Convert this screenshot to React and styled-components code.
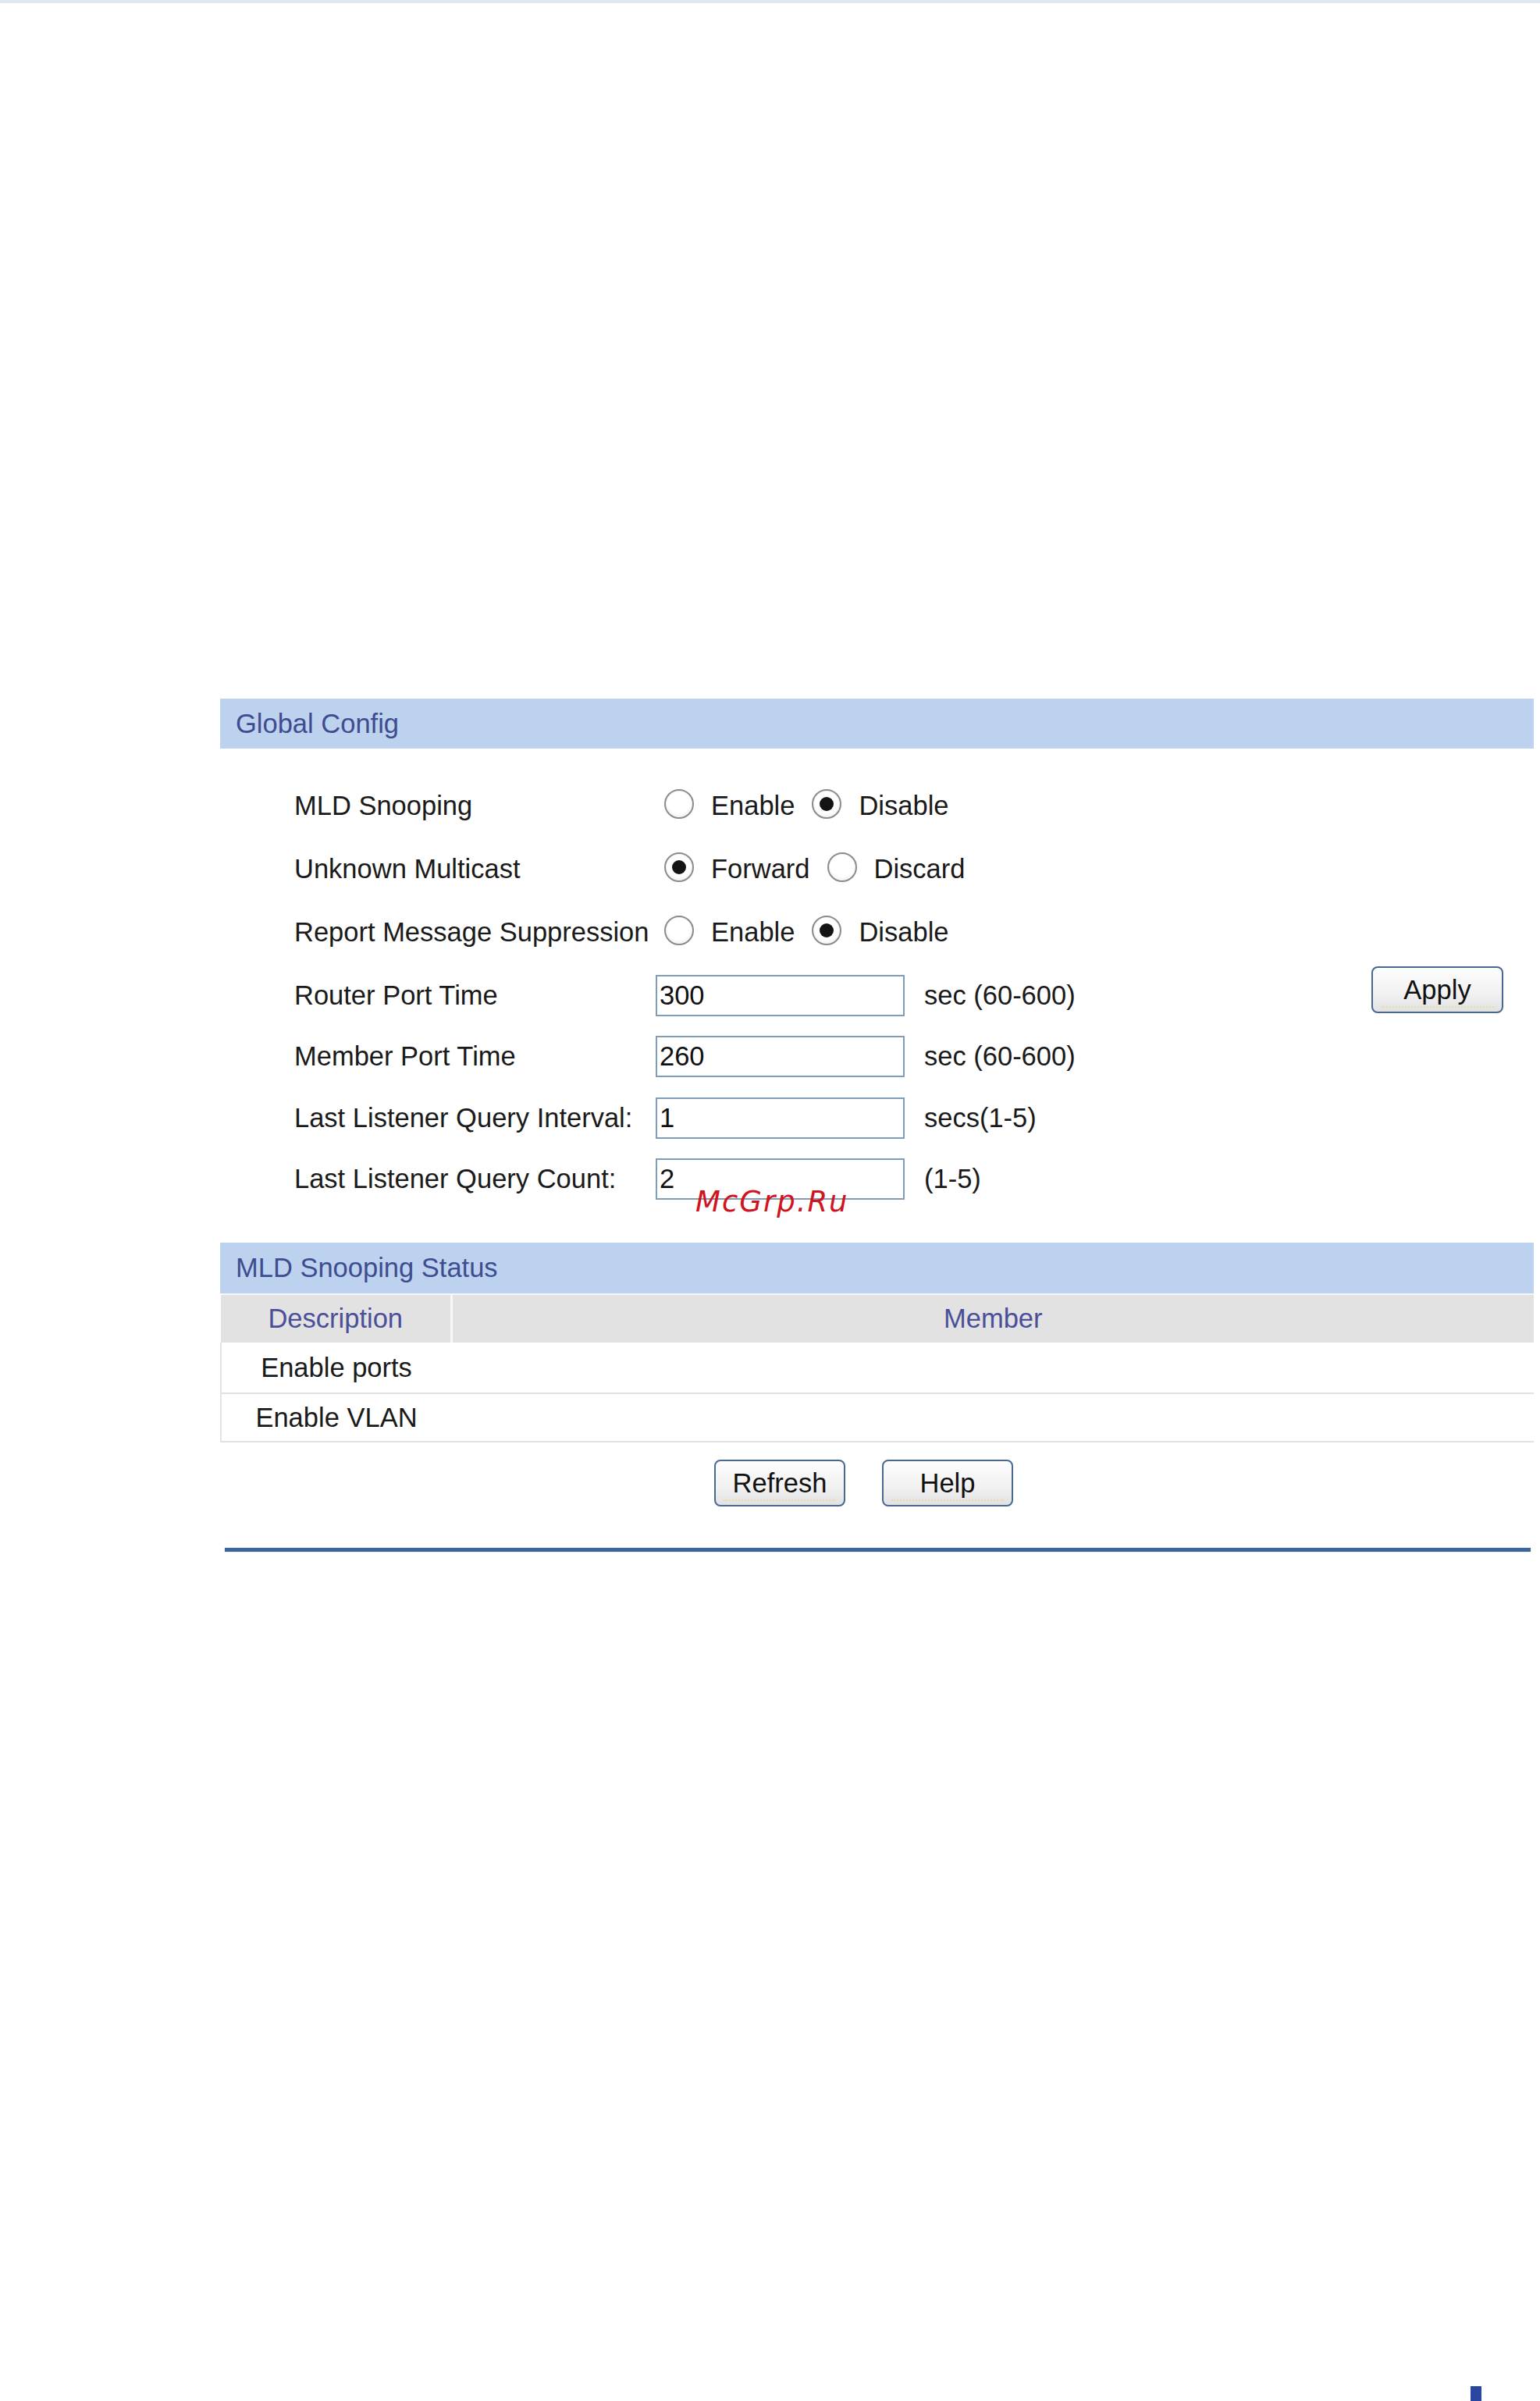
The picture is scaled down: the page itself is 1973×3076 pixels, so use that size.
import React from 'react';
import styled, { createGlobalStyle } from 'styled-components';

const GlobalStyle = createGlobalStyle`
  html, body {
    margin: 0;
    padding: 0;
    background: #fff;
  }
  body {
    font-family: "Liberation Sans", Arial, sans-serif;
    color: #1a1a1a;
  }
`;

const Page = styled.div`
  width: 1973px;
  min-height: 3076px;
  box-sizing: border-box;
  border-top: 4px solid #dde8ef;
  display: flex;
  flex-direction: column;
`;

const Content = styled.div`
  position: relative;
  margin: 891px 8px 0 282px;
`;

const SectionBar = styled.div`
  height: ${(p) => p.h}px;
  background: #bdd2ee;
  display: flex;
  align-items: center;
  padding-left: 20px;
  font-size: 34.5px;
  color: #3f4c90;
`;

const Form = styled.div`
  padding: 33px 0 0 95px;
  display: flex;
  flex-direction: column;
`;

const Row = styled.div`
  height: ${(p) => p.h}px;
  margin-top: ${(p) => p.gap || 0}px;
  display: flex;
  align-items: center;
  font-size: 34.5px;
`;

const Label = styled.div`
  width: 463px;
  flex-shrink: 0;
  white-space: nowrap;
`;

const Radio = styled.span`
  position: relative;
  width: 38px;
  height: 38px;
  box-sizing: border-box;
  border-radius: 50%;
  border: 2px solid #8c8c8c;
  background: radial-gradient(circle at 50% 40%, #ffffff 55%, #e6e6e6 100%);
  box-shadow: inset 0 0 0 1px #f4f4f4;
  margin: 0 22px 6px ${(p) => (p.first ? 11 : 0)}px;
  flex-shrink: 0;

  &::after {
    content: '';
    display: ${(p) => (p.checked ? 'block' : 'none')};
    position: absolute;
    left: 50%;
    top: 50%;
    width: 18px;
    height: 18px;
    margin: -9px 0 0 -9px;
    border-radius: 50%;
    background: #141414;
  }
`;

const Option = styled.span`
  margin-right: 22px;
`;

const Field = styled.input`
  width: 319px;
  height: 53px;
  box-sizing: border-box;
  border: 2px solid #7f9db9;
  padding: 0 3px;
  margin: 0;
  font-family: "Liberation Sans", Arial, sans-serif;
  font-size: 34.5px;
  color: #111;
  background: #fff;
  outline: none;
`;

const Unit = styled.span`
  margin-left: 25px;
`;

const Button = styled.button`
  position: relative;
  width: ${(p) => p.w || 168}px;
  height: 60px;
  box-sizing: border-box;
  border: 2px solid #4b6894;
  border-radius: 8px;
  background: linear-gradient(#fdfdfd, #f1f1f1 60%, #e2e2e2);
  font-family: "Liberation Sans", Arial, sans-serif;
  font-size: 34.5px;
  color: #111;
  padding: 0;
  cursor: pointer;

  &::after {
    content: '';
    position: absolute;
    left: 10px;
    right: 10px;
    bottom: 5px;
    border-bottom: 2px dotted #eadca6;
  }
`;

const ApplyButton = styled(Button)`
  margin: 0 39px 14px auto;
`;

const Status = styled.div`
  margin-top: 42px;
`;

const Table = styled.table`
  width: 100%;
  border-collapse: collapse;
  table-layout: fixed;
  border-top: 2px solid #f4f6f9;
  font-size: 34.5px;
`;

const HeadCell = styled.th`
  height: 61px;
  padding: 0;
  background: #e2e2e2;
  font-weight: normal;
  color: #4a4f9a;
  text-align: center;
  border-left: ${(p) => (p.divided ? '3px solid #f7f7f7' : 'none')};
`;

const Cell = styled.td`
  height: ${(p) => p.h}px;
  padding: 0;
  text-align: center;
  border-bottom: 2px solid #e2e2e2;
  border-left: ${(p) => (p.edge ? '2px solid #e4e4e4' : 'none')};
`;

const ButtonBar = styled.div`
  margin-top: 22px;
  padding-right: 34px;
  display: flex;
  justify-content: center;
  gap: 47px;
`;

const Rule = styled.div`
  margin: 53px 4px 0 6px;
  height: 5px;
  background: #3c6598;
  box-shadow: 0 0 1px #9bb3d2;
`;

const Watermark = styled.span`
  position: absolute;
  left: 609px;
  top: 626px;
  font-family: "DejaVu Sans", sans-serif;
  font-style: italic;
  font-size: 37px;
  line-height: 1;
  letter-spacing: 2px;
  color: #d0141e;
  pointer-events: none;
`;

const Footer = styled.div`
  margin-top: auto;
  display: flex;
  justify-content: flex-end;
  padding-right: 75px;
`;

const PageMark = styled.div`
  width: 14px;
  height: 19px;
  background: #2b46a0;
`;

const radioRows = [
  { label: 'MLD Snooping', options: [['Enable', false], ['Disable', true]] },
  { label: 'Unknown Multicast', options: [['Forward', true], ['Discard', false]] },
  { label: 'Report Message Suppression', options: [['Enable', false], ['Disable', true]] },
];

const fieldRows = [
  { label: 'Router Port Time', value: '300', unit: 'sec (60-600)', apply: true },
  { label: 'Member Port Time', value: '260', unit: 'sec (60-600)' },
  { label: 'Last Listener Query Interval:', value: '1', unit: 'secs(1-5)' },
  { label: 'Last Listener Query Count:', value: '2', unit: '(1-5)' },
];

const App = () => {
  return (
    <Page>
      <GlobalStyle />
      <Content>
        <SectionBar h={64}>Global Config</SectionBar>
        <Form>
          {radioRows.map((row) => (
            <Row key={row.label} h={81}>
              <Label>{row.label}</Label>
              {row.options.map(([text, checked], i) => (
                <React.Fragment key={text}>
                  <Radio first={i === 0} checked={checked} />
                  <Option>{text}</Option>
                </React.Fragment>
              ))}
            </Row>
          ))}
          {fieldRows.map((row, i) => (
            <Row key={row.label} h={78.5} gap={i === 0 ? 1 : 0}>
              <Label>{row.label}</Label>
              <Field readOnly value={row.value} />
              <Unit>{row.unit}</Unit>
              {row.apply && <ApplyButton w={169}>Apply</ApplyButton>}
            </Row>
          ))}
        </Form>
        <Status>
          <SectionBar h={65}>MLD Snooping Status</SectionBar>
          <Table>
            <colgroup>
              <col style={{ width: 295 }} />
              <col />
            </colgroup>
            <thead>
              <tr>
                <HeadCell>Description</HeadCell>
                <HeadCell divided>Member</HeadCell>
              </tr>
            </thead>
            <tbody>
              <tr>
                <Cell h={64} edge>Enable ports</Cell>
                <Cell h={64} />
              </tr>
              <tr>
                <Cell h={60} edge>Enable VLAN</Cell>
                <Cell h={60} />
              </tr>
            </tbody>
          </Table>
          <ButtonBar>
            <Button>Refresh</Button>
            <Button>Help</Button>
          </ButtonBar>
        </Status>
        <Rule />
        <Watermark>McGrp.Ru</Watermark>
      </Content>
      <Footer>
        <PageMark />
      </Footer>
    </Page>
  );
};

export default App;
